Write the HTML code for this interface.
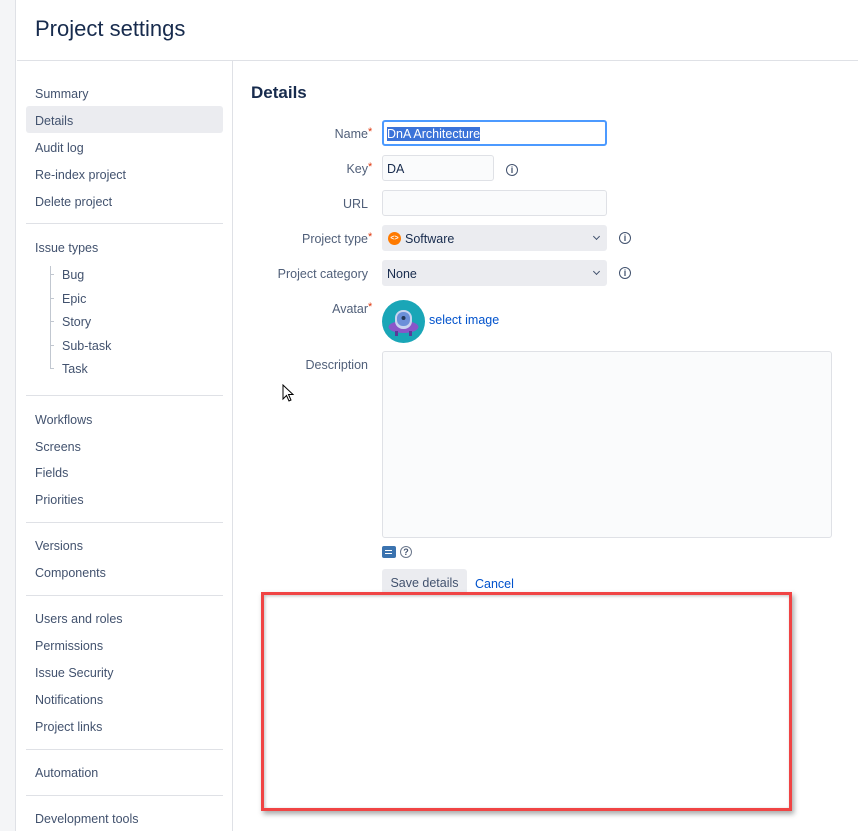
<!DOCTYPE html>
<html><head><meta charset="utf-8"><style>
*{margin:0;padding:0;box-sizing:border-box}
body{width:858px;height:831px;overflow:hidden;background:#fff;font-family:"Liberation Sans",sans-serif;color:#172b4d;position:relative}
.a{position:absolute}
.strip{left:0;top:0;width:16px;height:831px;background:#f4f5f7;border-right:1px solid #dfe1e6}
h1{position:absolute;left:35px;top:16px;font-size:22px;font-weight:normal;color:#172b4d}
.hl{left:17px;top:60px;width:841px;height:1px;background:#dfe1e6}
.vl{left:232px;top:61px;width:1px;height:770px;background:#dfe1e6}
.s{position:absolute;left:35px;font-size:12.5px;color:#42526e;line-height:16px}
.sub{left:62px}
.sep{position:absolute;left:26px;width:197px;height:1px;background:#dfe1e6}
.lab{position:absolute;right:490px;font-size:12.5px;color:#5e6c84;line-height:16px;text-align:right;font-weight:bold;-webkit-text-stroke:0}
.lab{font-weight:normal;color:#505f79}
.lab i{color:#de350b;font-style:normal;position:absolute;left:100%;top:-2px;font-size:11px;margin-left:0}
.in{position:absolute;left:382px;height:26px;background:#fafbfc;border:1px solid #dfe1e6;border-radius:3px;font-size:12.5px;line-height:26px;padding-left:4px;color:#172b4d}
.sel{background:#ebecf0;border-color:#ebecf0}
.info{position:absolute;width:12px;height:12px;border:1.3px solid #42526e;border-radius:50%;font-size:9px;line-height:10px;text-align:center;color:#42526e;font-weight:bold}
.chev{position:absolute;right:7px;top:8px;width:5px;height:5px;border-right:1.6px solid #42526e;border-bottom:1.6px solid #42526e;transform:rotate(45deg)}
</style></head><body>
<div class="a strip"></div>
<h1>Project settings</h1>
<div class="a hl"></div>
<div class="a vl"></div>

<div class="a" style="left:26px;top:106px;width:197px;height:27px;background:#ebecf0;border-radius:3px"></div>
<div class="s" style="top:86px">Summary</div>
<div class="s" style="top:113px">Details</div>
<div class="s" style="top:140px">Audit log</div>
<div class="s" style="top:167px">Re-index project</div>
<div class="s" style="top:194px">Delete project</div>
<div class="sep" style="top:223px"></div>
<div class="s" style="top:240px">Issue types</div>
<div class="a" style="left:50px;top:266px;width:1px;height:103px;background:#c1c7d0"></div>
<div class="a" style="left:50px;top:274px;width:4px;height:1px;background:#c1c7d0"></div>
<div class="a" style="left:50px;top:298px;width:4px;height:1px;background:#c1c7d0"></div>
<div class="a" style="left:50px;top:321px;width:4px;height:1px;background:#c1c7d0"></div>
<div class="a" style="left:50px;top:345px;width:4px;height:1px;background:#c1c7d0"></div>
<div class="a" style="left:50px;top:368px;width:4px;height:1px;background:#c1c7d0"></div>
<div class="s sub" style="top:267px">Bug</div>
<div class="s sub" style="top:291px">Epic</div>
<div class="s sub" style="top:314px">Story</div>
<div class="s sub" style="top:338px">Sub-task</div>
<div class="s sub" style="top:361px">Task</div>
<div class="sep" style="top:395px"></div>
<div class="s" style="top:412px">Workflows</div>
<div class="s" style="top:439px">Screens</div>
<div class="s" style="top:465px">Fields</div>
<div class="s" style="top:492px">Priorities</div>
<div class="sep" style="top:522px"></div>
<div class="s" style="top:538px">Versions</div>
<div class="s" style="top:565px">Components</div>
<div class="sep" style="top:595px"></div>
<div class="s" style="top:611px">Users and roles</div>
<div class="s" style="top:638px">Permissions</div>
<div class="s" style="top:665px">Issue Security</div>
<div class="s" style="top:692px">Notifications</div>
<div class="s" style="top:719px">Project links</div>
<div class="sep" style="top:749px"></div>
<div class="s" style="top:765px">Automation</div>
<div class="sep" style="top:795px"></div>
<div class="s" style="top:811px">Development tools</div>

<div class="a" style="left:251px;top:83px;font-size:17px;font-weight:bold;color:#172b4d">Details</div>

<div class="lab" style="top:126px">Name<i>*</i></div>
<div class="in" style="top:120px;width:225px;border:2px solid #4c9aff;background:#fff;line-height:24px;padding-left:3px"><span style="background:#3b73d9;color:#fff">DnA Architecture</span></div>
<div class="lab" style="top:161px">Key<i>*</i></div>
<div class="in" style="top:155px;width:112px">DA</div>
<div class="info" style="left:506px;top:164px">i</div>
<div class="lab" style="top:196px">URL</div>
<div class="in" style="top:190px;width:225px"></div>
<div class="lab" style="top:231px">Project type<i>*</i></div>
<div class="in sel" style="top:225px;width:225px;padding-left:22px">Software<div class="chev"></div>
<div class="a" style="left:5px;top:6px;width:13px;height:13px;border-radius:50%;background:#ff7a00;color:#fff;font-size:7px;line-height:13px;text-align:center;font-weight:bold">&lt;&gt;</div></div>
<div class="info" style="left:619px;top:232px">i</div>
<div class="lab" style="top:266px">Project category</div>
<div class="in sel" style="top:260px;width:225px">None<div class="chev"></div></div>
<div class="info" style="left:619px;top:267px">i</div>
<div class="lab" style="top:301px">Avatar<i>*</i></div>
<svg class="a" style="left:382px;top:300px" width="43" height="43" viewBox="0 0 43 43">
<circle cx="21.5" cy="21.5" r="21.5" fill="#1aa6b7"/>
<ellipse cx="21.5" cy="27" rx="15" ry="6" fill="#8a56c9"/>
<rect x="13" y="10" width="17" height="19" rx="8" fill="#c8d4f0"/>
<rect x="15" y="12" width="13" height="14" rx="6" fill="#6b8fd9"/>
<circle cx="21.5" cy="18" r="2" fill="#253858"/>
<rect x="13" y="31" width="3" height="5" fill="#5a3a9a"/><rect x="27" y="31" width="3" height="5" fill="#5a3a9a"/>
</svg>
<div class="a" style="left:429px;top:313px;font-size:12.5px;color:#0052cc">select image</div>
<div class="lab" style="top:357px">Description</div>
<div class="in" style="top:351px;width:450px;height:187px"></div>
<div class="a" style="left:382px;top:546px;width:14px;height:12px;background:#3b73af;border-radius:2px"></div>
<div class="a" style="left:385px;top:550px;width:7px;height:1px;background:#fff"></div>
<div class="a" style="left:385px;top:553px;width:7px;height:1px;background:#fff"></div>
<div class="info" style="left:400px;top:546px;width:12px;height:12px;border-color:#6b778c">?</div>
<div class="a" style="left:382px;top:569px;width:85px;height:26px;background:#ebecf0;border-radius:3px;font-size:12.5px;line-height:28px;text-align:center;color:#42526e">Save details</div>
<div class="a" style="left:475px;top:577px;font-size:12.5px;color:#0052cc">Cancel</div>

<svg class="a" style="left:282px;top:384px" width="14" height="20" viewBox="0 0 14 20"><path d="M1 1 L1 15 L4.5 11.5 L7 17 L9 16 L6.5 10.5 L11 10.5 Z" fill="#fff" stroke="#000" stroke-width="1"/></svg>

<div class="a" style="left:261px;top:592px;width:531px;height:219px;border:3px solid #f04444;box-shadow:2px 3px 5px rgba(0,0,0,0.35), inset 1px 1px 3px rgba(0,0,0,0.25)"></div>
</body></html>
